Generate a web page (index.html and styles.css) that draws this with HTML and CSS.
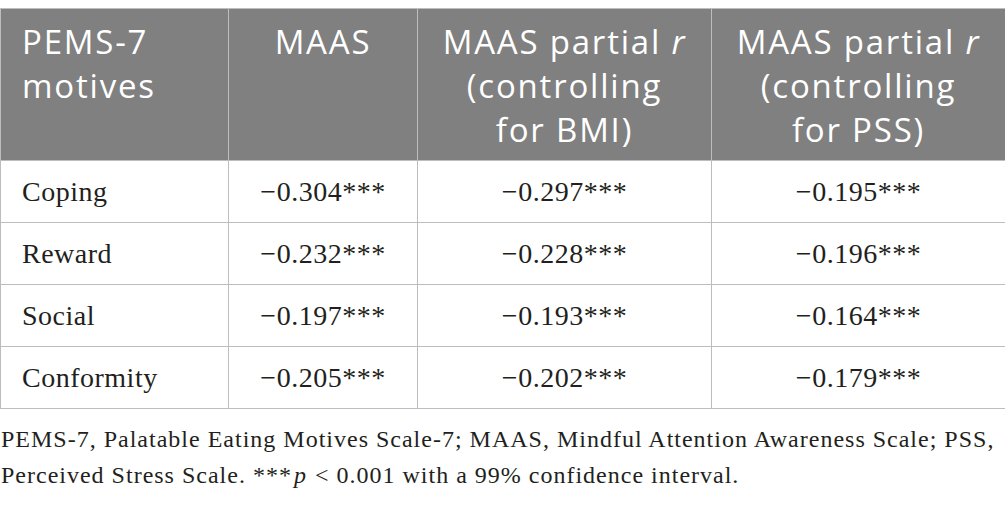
FILE: index.html
```
<!DOCTYPE html>
<html lang="en">
<head>
    <meta charset="UTF-8">
    <meta name="viewport" content="width=device-width, initial-scale=1.0">
    <title>PEMS-7 and MAAS correlations</title>
    <link rel="stylesheet" href="styles.css">
</head>
<body>
    <table class="results">
        <colgroup>
            <col class="c1">
            <col class="c2">
            <col class="c3">
            <col class="c4">
        </colgroup>
        <thead>
            <tr>
                <th class="first">PEMS-7 motives</th>
                <th>MAAS</th>
                <th>MAAS partial&nbsp;<i>r</i> (controlling for BMI)</th>
                <th>MAAS partial&nbsp;<i>r</i> (controlling for PSS)</th>
            </tr>
        </thead>
        <tbody>
            <tr>
                <td class="first">Coping</td>
                <td>&minus;0.304***</td>
                <td>&minus;0.297***</td>
                <td>&minus;0.195***</td>
            </tr>
            <tr>
                <td class="first">Reward</td>
                <td>&minus;0.232***</td>
                <td>&minus;0.228***</td>
                <td>&minus;0.196***</td>
            </tr>
            <tr>
                <td class="first">Social</td>
                <td>&minus;0.197***</td>
                <td>&minus;0.193***</td>
                <td>&minus;0.164***</td>
            </tr>
            <tr>
                <td class="first">Conformity</td>
                <td>&minus;0.205***</td>
                <td>&minus;0.202***</td>
                <td>&minus;0.179***</td>
            </tr>
        </tbody>
    </table>

    <p class="note">PEMS-7, Palatable Eating Motives Scale-7; MAAS, Mindful Attention Awareness Scale; PSS, Perceived Stress Scale. ***<i class="pval">p</i>&nbsp;&lt; 0.001 with a 99% confidence interval.</p>
</body>
</html>
```

FILE: styles.css
```
body { margin: 0; background: #fff; font-family: "Liberation Serif", serif; color: #231f20; }
.results { border-collapse: collapse; width: 1005px; margin-top: 8px; table-layout: fixed; }
.c1 { width: 228px; }
.c2 { width: 189px; }
.c3 { width: 294px; }
.c4 { width: 294px; }
.results th, .results td { border: 1px solid #bdbdbd; text-align: center; }
.results th { background: #7f807f; color: #fff; font-family: "Open Sans", sans-serif; font-weight: 400; font-size: 33px; letter-spacing: 1.8px; line-height: 44px; vertical-align: top; padding: 11px 22px 8px; }
.results td { font-size: 28px; letter-spacing: 0.5px; height: 61px; padding: 0 16px; vertical-align: middle; }
.results .first { text-align: left; padding-left: 21px; }
.note { margin: 12px 0 0 1px; font-size: 24px; letter-spacing: 1px; line-height: 36px; width: 1004px; }
.pval { display: inline-block; padding: 0 1px 0 2px; }
```
